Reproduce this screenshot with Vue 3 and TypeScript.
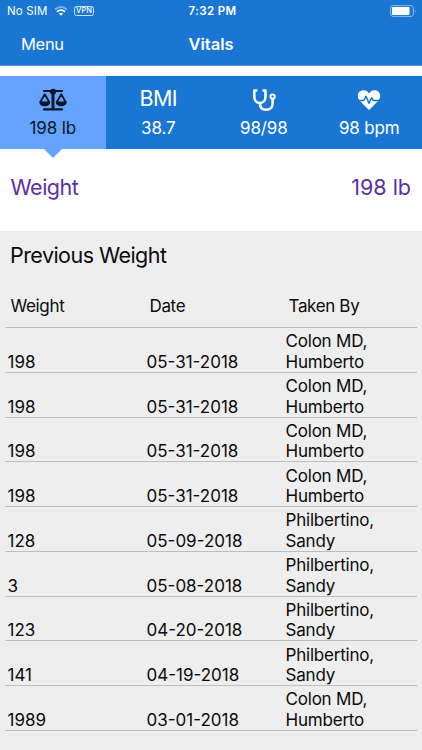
<script setup lang="ts">
interface Tab {
  id: string
  value: string
}

interface Reading {
  weight: string
  date: string
  last: string
  first: string
}

const activeTab = 'weight'

const tabs: Tab[] = [
  { id: 'weight', value: '198 lb' },
  { id: 'bmi', value: '38.7' },
  { id: 'pressure', value: '98/98' },
  { id: 'pulse', value: '98 bpm' },
]

const readings: Reading[] = [
  { weight: '198', date: '05-31-2018', last: 'Colon MD,', first: 'Humberto' },
  { weight: '198', date: '05-31-2018', last: 'Colon MD,', first: 'Humberto' },
  { weight: '198', date: '05-31-2018', last: 'Colon MD,', first: 'Humberto' },
  { weight: '198', date: '05-31-2018', last: 'Colon MD,', first: 'Humberto' },
  { weight: '128', date: '05-09-2018', last: 'Philbertino,', first: 'Sandy' },
  { weight: '3', date: '05-08-2018', last: 'Philbertino,', first: 'Sandy' },
  { weight: '123', date: '04-20-2018', last: 'Philbertino,', first: 'Sandy' },
  { weight: '141', date: '04-19-2018', last: 'Philbertino,', first: 'Sandy' },
  { weight: '1989', date: '03-01-2018', last: 'Colon MD,', first: 'Humberto' },
]
</script>

<template>
  <div class="screen">
    <header class="top">
      <div class="status">
        <div class="status-left">
          <span class="carrier">No SIM</span>
          <svg class="wifi" width="14" height="10" viewBox="0 0 14 10" fill="none">
            <path d="M1 3.5Q7-1.5 13 3.5" stroke="#fff" stroke-opacity=".45" stroke-width="1.7" />
            <path d="M3 5.7Q7 2.5 11 5.7" stroke="#fff" stroke-width="1.8" />
            <path d="M4.8 7.6Q7 5.9 9.2 7.6L7 9.8Z" fill="#fff" />
          </svg>
          <span class="vpn">VPN</span>
        </div>
        <span class="clock">7:32 PM</span>
        <div class="status-right">
          <svg width="27" height="12" viewBox="0 0 27 12" fill="none">
            <rect x=".6" y=".6" width="22.8" height="10.8" rx="2.5" stroke="#fff" stroke-opacity=".5" />
            <rect x="2" y="2" width="17.5" height="8" rx="1" fill="#fff" />
            <path d="M25 4Q26.5 6 25 8Z" fill="#fff" fill-opacity=".5" />
          </svg>
        </div>
      </div>
      <nav class="nav">
        <span class="menu">Menu</span>
        <h1 class="title">Vitals</h1>
        <span></span>
      </nav>
    </header>

    <div class="tabs">
      <div v-for="tab in tabs" :key="tab.id" class="tab" :class="{ active: tab.id === activeTab }">
        <div class="glyph">
          <svg v-if="tab.id === 'weight'" width="28" height="24" viewBox="0 0 28 24">
            <g fill="none" stroke="#0a1626" stroke-linecap="round" stroke-linejoin="round">
              <path d="M5 3H23M5 21.4H23" stroke-width="2.2" />
              <path d="M14 3V21" stroke-width="3" stroke-linecap="butt" />
              <path d="M1.4 14L5.7 6.3L10.2 14M17.8 14L22.3 6.3L26.6 14" stroke-width="1.8" />
            </g>
            <circle cx="14" cy="3.8" r="3" fill="#0a1626" />
            <path d="M.3 13.6H11.3Q11.2 18.3 5.8 18.3T.3 13.6ZM16.7 13.6H27.7Q27.6 18.3 22.2 18.3T16.7 13.6Z" fill="#0a1626" />
          </svg>
          <span v-else-if="tab.id === 'bmi'" class="bmi">BMI</span>
          <svg v-else-if="tab.id === 'pressure'" width="24" height="24" viewBox="0 0 24 24" fill="none" stroke="#fff">
            <path d="M4.3 2.4H2.3V8.5C2.3 12.5 4.5 15 7.8 15S13.5 12.5 13.5 8.5V2.4H11.5" stroke-width="2.5" stroke-linecap="round" stroke-linejoin="round" />
            <path d="M7.9 15C7.9 19.3 10.1 21.8 14 21.8C18 21.8 20.6 19.4 20.6 15.5V11" stroke-width="2.5" />
            <circle cx="20.6" cy="8.7" r="2.1" stroke-width="2" />
          </svg>
          <svg v-else width="24" height="24" viewBox="0 0 24 24">
            <path d="M12 22L3 13C-1.3 8.2 1.2 2.3 6.5 2.3C9 2.3 10.9 3.5 12 5.6C13.1 3.5 15 2.3 17.5 2.3C22.8 2.3 25.3 8.2 21 13Z" fill="#fff" />
            <path d="M1 12.5H6.8L9 8.2L12 15.2L14.6 9.8L16.2 12.5H23" fill="none" stroke="#1976d2" stroke-width="1.5" stroke-linejoin="round" />
          </svg>
        </div>
        <span class="value">{{ tab.value }}</span>
      </div>
    </div>

    <section class="current">
      <span class="current-name">Weight</span>
      <span>198 lb</span>
    </section>

    <section class="history">
      <h2 class="heading">Previous Weight</h2>
      <div class="table">
        <div class="row head">
          <span>Weight</span>
          <span>Date</span>
          <span>Taken By</span>
        </div>
        <div v-for="(r, i) in readings" :key="i" class="row entry">
          <span>{{ r.weight }}</span>
          <span>{{ r.date }}</span>
          <span class="taker">{{ r.last }}<br />{{ r.first }}</span>
        </div>
      </div>
    </section>
  </div>
</template>

<style>
body {
  margin: 0;
  background: #eee;
}
</style>

<style scoped>
.screen {
  height: 750px;
  display: flex;
  flex-direction: column;
  overflow: hidden;
  background: #fff;
  color: #0b0b0b;
  font-family: Inter, 'Liberation Sans', sans-serif;
}

.top {
  height: 66px;
  box-sizing: border-box;
  flex: none;
  color: #fff;
  background: #1976d2;
  border-bottom: 1px solid #5d9fe0;
}

.status {
  display: grid;
  grid-template-columns: 1fr auto 1fr;
  align-items: center;
  height: 22px;
  padding: 0 5px 0 7px;
}

.status-left {
  display: flex;
  align-items: center;
}

.carrier {
  font-size: 11.5px;
  letter-spacing: 0.15px;
}

.wifi {
  margin: 0 6px 0 6px;
}

.vpn {
  height: 8px;
  padding: 0 1.5px;
  border: 1px solid #cfe2f6;
  border-radius: 2.5px;
  font-size: 7.5px;
  line-height: 8px;
  font-weight: 500;
}

.clock {
  padding-left: 1px;
  font-size: 11.5px;
  font-weight: 600;
  letter-spacing: 0.35px;
}

.status-right {
  display: flex;
  justify-content: flex-end;
}

.nav {
  display: grid;
  grid-template-columns: 1fr auto 1fr;
  align-items: center;
  height: 43px;
  padding: 0 21px;
}

.menu {
  font-size: 16.5px;
  letter-spacing: -0.3px;
}

.title {
  margin: 0;
  font-size: 16.5px;
  font-weight: 600;
}

.tabs {
  display: grid;
  grid-template-columns: repeat(4, 1fr);
  flex: none;
  height: 73px;
  margin-top: 10px;
  background: #1976d2;
}

.tab {
  position: relative;
  display: flex;
  flex-direction: column;
  align-items: center;
  padding-top: 11px;
  color: #fff;
}

.tab.active {
  color: #0a1626;
  background: #64a3ff;
}

.tab.active::after {
  content: '';
  position: absolute;
  top: 100%;
  left: 50%;
  border: 9px solid transparent;
  border-top-color: #64a3ff;
  border-bottom: 0;
  transform: translateX(-50%);
}

.glyph {
  display: flex;
  align-items: center;
  justify-content: center;
  height: 25px;
}

.bmi {
  margin-top: -3px;
  font-size: 21.5px;
  letter-spacing: -0.6px;
}

.value {
  margin-top: 6px;
  font-size: 17px;
  line-height: 21px;
  letter-spacing: -0.15px;
}

.current {
  display: flex;
  flex: none;
  justify-content: space-between;
  height: 82px;
  padding: 0 11px 0 10.5px;
  color: #5b2fa5;
  font-size: 21.5px;
  line-height: 77px;
}

.current-name {
  letter-spacing: -0.5px;
}

.history {
  flex: 1;
  background: #eee;
}

.heading {
  margin: 0;
  padding-left: 10px;
  font-size: 21.5px;
  font-weight: 400;
  line-height: 49px;
  letter-spacing: -0.55px;
}

.table {
  margin: 0 5px;
}

.row {
  display: grid;
  grid-template-columns: 139px 139px 1fr;
  align-items: end;
  box-sizing: border-box;
  height: 44.78px;
  padding: 0 2.5px;
  border-bottom: 1px solid #bdbdbd;
  font-size: 17px;
  line-height: 20.5px;
}

.entry > span {
  margin-bottom: -0.5px;
}

.entry .taker {
  letter-spacing: -0.2px;
}

.head {
  height: 48px;
  padding: 0 5.5px 10.5px;
  letter-spacing: -0.35px;
}
</style>
